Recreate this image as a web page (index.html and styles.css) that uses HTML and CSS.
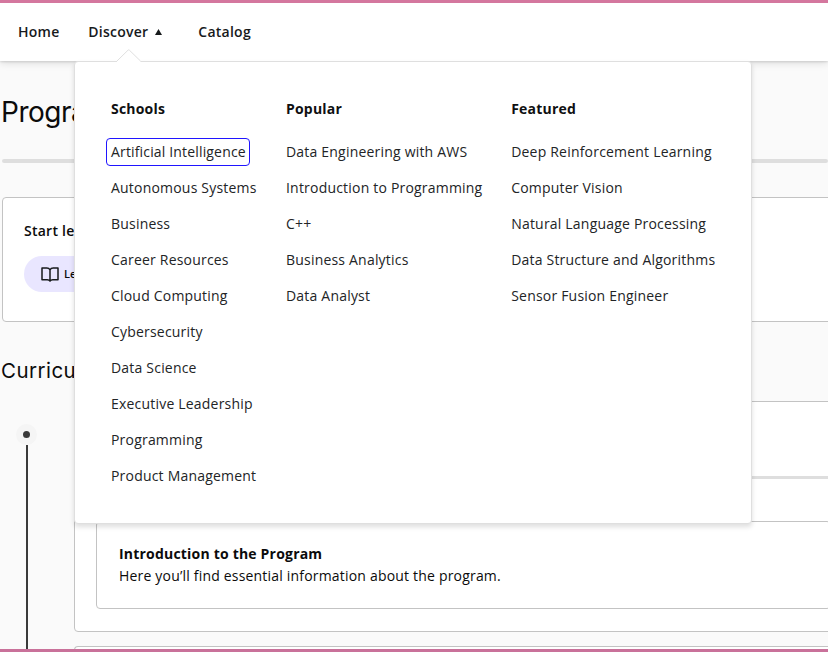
FILE: index.html
```html
<!DOCTYPE html>
<html lang="en">
<head>
<meta charset="utf-8">
<title>Program Home</title>
<link rel="stylesheet" href="styles.css">
</head>
<body>
<header class="topbar">
  <nav class="nav">
    <a class="nav-home">Home</a>
    <a class="nav-discover">Discover
      <svg class="caret" width="7" height="6" viewBox="0 0 7 6"><path d="M3.5 0L7 6H0z" fill="#171a1c"/></svg>
    </a>
    <a class="nav-catalog">Catalog</a>
  </nav>
</header>
<div class="menu">
  <svg class="notch" width="24" height="13" viewBox="0 0 24 13"><path d="M0 13V12L11 1.2Q11.7 .5 12.4 1.2L23.5 12V13Z" fill="#fff"/><path d="M0 12L11 1.2Q11.7 .5 12.4 1.2L23.5 12" fill="none" stroke="#dfdfdf"/></svg>
  <section class="col schools">
    <h3>Schools</h3>
    <ul>
      <li><a class="focused">Artificial Intelligence</a></li>
      <li><a>Autonomous Systems</a></li>
      <li><a>Business</a></li>
      <li><a>Career Resources</a></li>
      <li><a>Cloud Computing</a></li>
      <li><a>Cybersecurity</a></li>
      <li><a>Data Science</a></li>
      <li><a>Executive Leadership</a></li>
      <li><a>Programming</a></li>
      <li><a>Product Management</a></li>
    </ul>
  </section>
  <section class="col popular">
    <h3>Popular</h3>
    <ul>
      <li><a>Data Engineering with AWS</a></li>
      <li><a>Introduction to Programming</a></li>
      <li><a>C++</a></li>
      <li><a>Business Analytics</a></li>
      <li><a>Data Analyst</a></li>
    </ul>
  </section>
  <section class="col featured">
    <h3>Featured</h3>
    <ul>
      <li><a>Deep Reinforcement Learning</a></li>
      <li><a>Computer Vision</a></li>
      <li><a>Natural Language Processing</a></li>
      <li><a>Data Structure and Algorithms</a></li>
      <li><a>Sensor Fusion Engineer</a></li>
    </ul>
  </section>
</div>
<main class="page">
  <h1>Program</h1>
  <div class="track"></div>
  <section class="start-card">
    <h2>Start learning</h2>
    <span class="pill">
      <svg width="18" height="15" viewBox="0 0 18 15" fill="none" stroke="#171a1c" stroke-width="1.5" stroke-linejoin="round" stroke-linecap="round"><path d="M9 2.8Q8 1 5.8 1H1V12.7H6.2Q8.2 12.7 9 14Q9.8 12.7 11.8 12.7H17V1H12.2Q10 1 9 2.8ZM9 2.8V13.6"/></svg>
      Lesson
    </span>
  </section>
  <h2 class="curriculum-title">Curriculum</h2>
  <div class="curriculum">
    <div class="timeline"><span class="dot"></span><span class="line"></span></div>
    <div class="courses">
      <article class="course">
        <div class="course-head"></div>
        <div class="course-body">
          <div class="lesson">
            <h4>Introduction to the Program</h4>
            <p>Here you’ll find essential information about the program.</p>
          </div>
        </div>
      </article>
      <article class="course next"></article>
    </div>
  </div>
</main>
</body>
</html>
```
FILE: styles.css
```css
* { box-sizing: border-box; }
body {
  margin: 0;
  height: 652px;
  overflow: hidden;
  position: relative;
  display: flex;
  flex-direction: column;
  border-top: 3px solid #d4779e;
  border-bottom: 3px solid #c9719a;
  background: #fafafa;
  color: #0b0b0b;
  font: 14px/22px "Open Sans", sans-serif;
}
h1, h2, h3, h4, p, ul { margin: 0; padding: 0; }
ul { list-style: none; }

.topbar {
  position: relative;
  flex: none;
  height: 58px;
  background: #fff;
  box-shadow: 0 1px 2px rgba(0,0,0,.12), 0 2px 8px rgba(0,0,0,.12);
}
.nav {
  display: flex;
  align-items: center;
  height: 58px;
  padding-left: 18px;
  font-weight: 600;
  letter-spacing: .25px;
  color: #171a1c;
}
.nav-home { width: 70.3px; }
.nav-discover { width: 110px; display: flex; align-items: center; gap: 7px; }

.menu {
  position: absolute;
  z-index: 2;
  left: 74px;
  top: 58px;
  width: 678px;
  height: 463px;
  display: grid;
  grid-template-columns: 175px 225.2px 1fr;
  padding: 36px 0 0 36px;
  border: 1px solid #dfdfdf;
  border-radius: 4px;
  background: #fff;
  box-shadow: 0 3px 5px rgba(0,0,0,.13);
  color: #222426;
  letter-spacing: .2px;
}
.notch { position: absolute; left: 42px; top: -13px; }
.col h3 { font-size: 14px; line-height: 22px; font-weight: 700; color: #0f1011; margin-bottom: 14px; }
.col li { height: 36px; display: flex; align-items: center; }
.focused {
  width: 144px;
  margin-left: -5px;
  padding: 2px 4px;
  border: 1px solid #2015ff;
  border-radius: 4px;
  line-height: 22px;
  letter-spacing: .16px;
  white-space: nowrap;
}

.page { flex: 1; min-height: 0; padding-left: 2px; overflow: hidden; }
h1 { padding-top: 31px; margin-left: -1px; font: 400 28px/40px Inter, sans-serif; letter-spacing: -.5px; }
.track { height: 4px; margin-top: 27px; background: #dedede; border-radius: 2px; }
.start-card {
  height: 125px;
  margin: 34px -4px 0 0;
  padding: 22px 0 0 21px;
  border: 1px solid #c3c3c3;
  border-radius: 4px;
  background: #fff;
}
.start-card h2 { font-size: 14px; line-height: 22px; font-weight: 600; letter-spacing: .25px; }
.pill {
  display: flex;
  align-items: center;
  gap: 5px;
  width: 100px;
  height: 36px;
  margin-top: 14px;
  padding-left: 17px;
  border-radius: 18px;
  background: #e9e6ff;
  font-size: 11px;
  font-weight: 600;
}
.curriculum-title { margin: 34px 0 0 -1px; font: 400 20.5px/30px Inter, sans-serif; letter-spacing: .45px; }
.curriculum { display: flex; margin-top: 15px; height: 263px; }
.timeline { width: 72px; padding: 23px 0 0 14px; }
.dot {
  display: block;
  width: 21px;
  height: 21px;
  border: 7px solid #f5f5f5;
  border-radius: 50%;
  background: #3a3a3a;
}
.line { display: block; width: 2px; height: 210px; margin-left: 10px; background: #3a3a3a; }
.courses { flex: 1; margin-right: -4px; }
.course { height: 231px; border: 1px solid #c3c3c3; border-radius: 4px; background: #fff; }
.course-head { height: 77px; border-bottom: 3px solid #dedede; }
.course-body { padding: 42px 0 0 21px; }
.lesson {
  height: 88px;
  padding: 21px 22px;
  border: 1px solid #c3c3c3;
  border-radius: 4px;
}
.lesson h4 { font-size: 14px; font-weight: 700; letter-spacing: .2px; }
.lesson p { letter-spacing: .19px; }
.next { height: 18px; margin-top: 14px; border-bottom: 0; border-radius: 4px 4px 0 0; }
```
